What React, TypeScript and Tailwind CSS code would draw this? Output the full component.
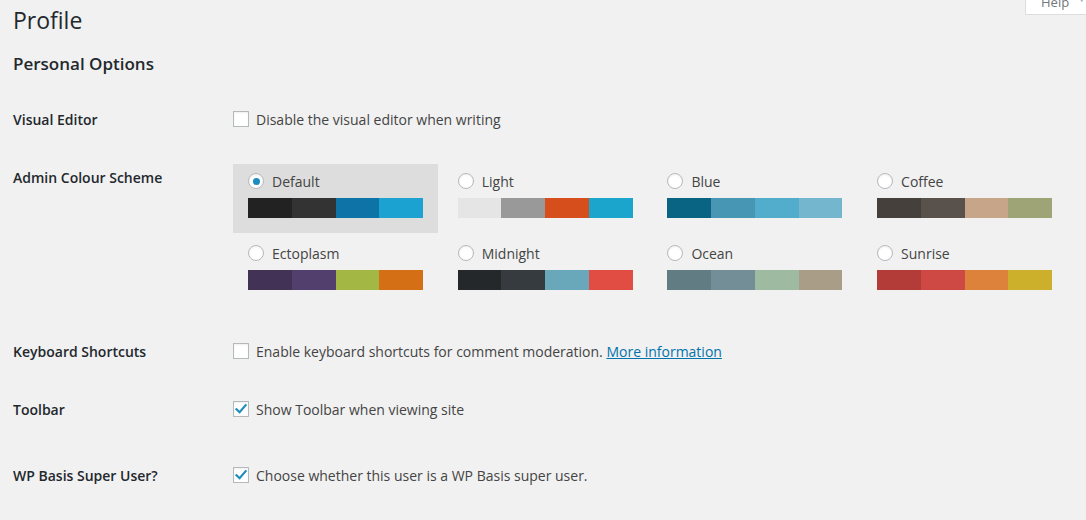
import React from 'react';

type Scheme = { name: string; colors: string[]; selected?: boolean };

const schemes: Scheme[] = [
  { name: 'Default', colors: ['#222222', '#333333', '#0e74a8', '#1ca2d1'], selected: true },
  { name: 'Light', colors: ['#e5e5e5', '#999999', '#d64e1c', '#1ba4cc'] },
  { name: 'Blue', colors: ['#096484', '#4796b3', '#52accc', '#74b6ce'] },
  { name: 'Coffee', colors: ['#46403c', '#59524c', '#c7a589', '#9ea476'] },
  { name: 'Ectoplasm', colors: ['#413256', '#523f6d', '#a3b745', '#d46f15'] },
  { name: 'Midnight', colors: ['#25282b', '#363b3f', '#69a8bb', '#e14d43'] },
  { name: 'Ocean', colors: ['#627c83', '#738e96', '#9ebaa0', '#aa9d88'] },
  { name: 'Sunrise', colors: ['#b43c38', '#cf4944', '#dd823b', '#ccaf2b'] },
];

const Checkbox = ({ checked }: { checked?: boolean }) => (
  <span className="mt-[1px] flex h-[16px] w-[16px] shrink-0 items-center justify-center border border-[#b4b9be] bg-white shadow-[inset_0_1px_2px_rgba(0,0,0,0.07)]">
    {checked && (
      <svg width="14" height="14" viewBox="0 0 14 14">
        <path d="M2.5 7.2 L5.6 10.2 L11.6 3.2" fill="none" stroke="#1e8cbe" strokeWidth="2.2" strokeLinecap="square" />
      </svg>
    )}
  </span>
);

const Radio = ({ checked }: { checked?: boolean }) => (
  <span className="flex h-[16px] w-[16px] shrink-0 items-center justify-center rounded-full border border-[#b4b9be] bg-white shadow-[inset_0_1px_2px_rgba(0,0,0,0.07)]">
    {checked && <span className="h-[7px] w-[7px] rounded-full bg-[#1e8cbe]" />}
  </span>
);

const Row = ({ label, className, children }: { label: string; className: string; children: React.ReactNode }) => (
  <div className={`flex ${className}`}>
    <div className="w-[220px] shrink-0 text-[14px] leading-[20px] font-semibold text-[#23282d]">{label}</div>
    <div className="flex items-start gap-[7px] leading-[20px]">{children}</div>
  </div>
);

export default function App() {
  return (
    <div className="relative h-[520px] w-full overflow-hidden bg-[#f1f1f1] px-[13px] font-['Open_Sans',sans-serif] text-[14px] text-[#444]">
      {/* help tab, cut at the top */}
      <div className="absolute right-0 top-0 flex h-[15px] w-[61px] items-end overflow-hidden border-b border-l border-[#dddddd] bg-white pl-[15px]">
        <span className="mb-[5px] text-[13px] leading-[13px] text-[#72777c]">Help</span>
        <span className="mb-[11px] ml-[8px] text-[9px] leading-[9px] text-[#a0a5aa]">▼</span>
      </div>

      <h1 className="pt-[6px] text-[23px] leading-[29px] font-normal text-[#23282d]">Profile</h1>
      <h2 className="mt-[17px] text-[17px] leading-[24px] font-semibold text-[#23282d]">Personal Options</h2>

      <Row label="Visual Editor" className="mt-[34px]">
        <Checkbox />
        <span>Disable the visual editor when writing</span>
      </Row>

      <div className="mt-[34px] flex">
        <div className="w-[220px] shrink-0 pt-[4px] text-[14px] leading-[20px] font-semibold text-[#23282d]">
          Admin Colour Scheme
        </div>
        <div className="grid grid-cols-[205px_205px_205px_205px] gap-x-[4.7px] gap-y-[3px]">
          {schemes.map((s) => (
            <div
              key={s.name}
              className={`px-[15px] pt-[5px] pb-[15px] ${s.selected ? 'bg-[#dddddd]' : ''}`}
            >
              <div className="flex h-[24px] items-center gap-[8px]">
                <Radio checked={s.selected} />
                <span className="pt-[2px] leading-[20px]">{s.name}</span>
              </div>
              <div className="mt-[5px] flex h-[20px] w-[175px]">
                {s.colors.map((c) => (
                  <div key={c} className="h-full flex-1" style={{ backgroundColor: c }} />
                ))}
              </div>
            </div>
          ))}
        </div>
      </div>

      <Row label="Keyboard Shortcuts" className="mt-[37px]">
        <Checkbox />
        <span>
          Enable keyboard shortcuts for comment moderation.{' '}
          <a href="#" className="text-[#0073aa] underline">More information</a>
        </span>
      </Row>

      <Row label="Toolbar" className="mt-[38px]">
        <Checkbox checked />
        <span>Show Toolbar when viewing site</span>
      </Row>

      <Row label="WP Basis Super User?" className="mt-[46px]">
        <Checkbox checked />
        <span>Choose whether this user is a WP Basis super user.</span>
      </Row>
    </div>
  );
}
